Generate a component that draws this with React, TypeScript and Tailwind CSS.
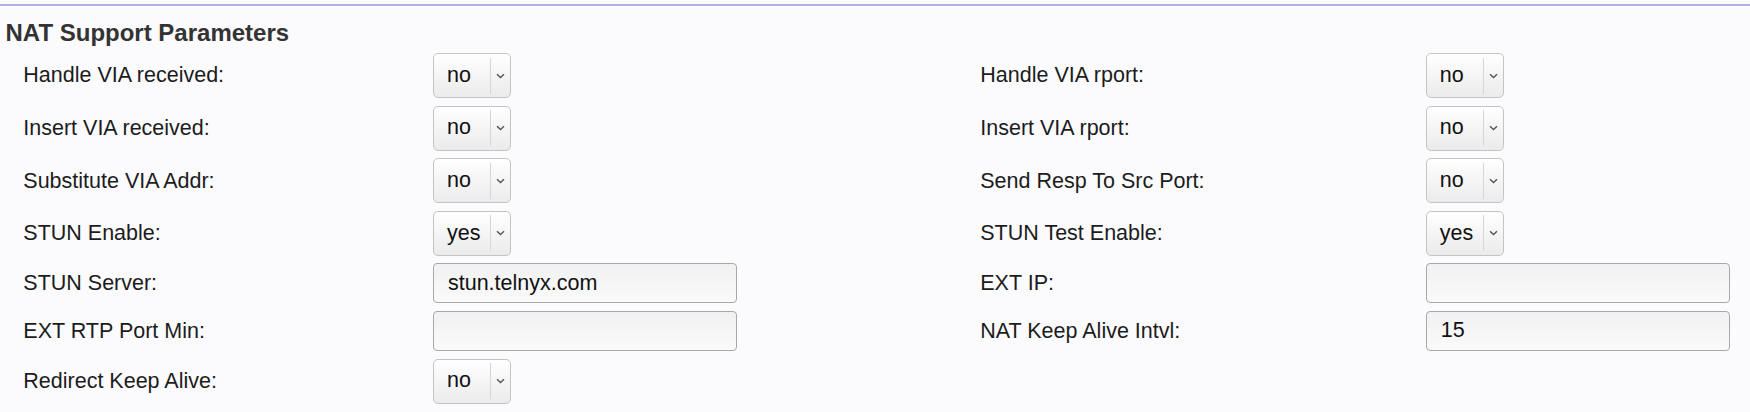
import React from 'react';

type Field =
  | { label: string; kind: 'select'; value: string }
  | { label: string; kind: 'input'; value: string }
  | null;

const rows: [Field, Field][] = [
  [
    { label: 'Handle VIA received:', kind: 'select', value: 'no' },
    { label: 'Handle VIA rport:', kind: 'select', value: 'no' },
  ],
  [
    { label: 'Insert VIA received:', kind: 'select', value: 'no' },
    { label: 'Insert VIA rport:', kind: 'select', value: 'no' },
  ],
  [
    { label: 'Substitute VIA Addr:', kind: 'select', value: 'no' },
    { label: 'Send Resp To Src Port:', kind: 'select', value: 'no' },
  ],
  [
    { label: 'STUN Enable:', kind: 'select', value: 'yes' },
    { label: 'STUN Test Enable:', kind: 'select', value: 'yes' },
  ],
  [
    { label: 'STUN Server:', kind: 'input', value: 'stun.telnyx.com' },
    { label: 'EXT IP:', kind: 'input', value: '' },
  ],
  [
    { label: 'EXT RTP Port Min:', kind: 'input', value: '' },
    { label: 'NAT Keep Alive Intvl:', kind: 'input', value: '15' },
  ],
  [{ label: 'Redirect Keep Alive:', kind: 'select', value: 'no' }, null],
];

const Select: React.FC<{ value: string }> = ({ value }) => (
  <div className="flex h-[45px] w-[78px] items-center rounded-[5px] border border-[#c4c4c4] bg-linear-to-b from-white to-[#ebebeb]">
    <span className="w-[56px] pl-[13px] text-[21.5px] leading-none text-[#111]">{value}</span>
    <div className="flex h-[36px] flex-1 items-center justify-center border-l border-[#d6d6d6]">
      <svg width="9" height="6" viewBox="0 0 9 6" fill="none">
        <path d="M1 1.2l3.5 3.3L8 1.2" stroke="#555" strokeWidth="1.4" />
      </svg>
    </div>
  </div>
);

const Input: React.FC<{ value: string }> = ({ value }) => (
  <div className="flex h-[40px] w-[304px] items-center rounded-[4px] border border-[#a8a8a8] bg-linear-to-b from-[#f1f1f1] to-[#fafafa] pl-[14px] text-[21.5px] leading-none text-[#111]">
    {value}
  </div>
);

const Cells: React.FC<{ field: Field }> = ({ field }) => {
  if (!field) return (<><div /><div /></>);
  return (
    <>
      <div className="flex items-center text-[21.5px] text-[#1c1c1c]">{field.label}</div>
      <div className="flex items-center">
        {field.kind === 'select' ? <Select value={field.value} /> : <Input value={field.value} />}
      </div>
    </>
  );
};

export default function App() {
  return (
    <div className="h-[412px] w-full overflow-hidden bg-[#fbfbfd] font-['Liberation_Sans',Arial,sans-serif]">
      <div className="pt-[4px]">
        <div className="h-[2px] bg-[#b3b1e4]" />
      </div>
      <h2 className="mt-[13px] pl-[5.5px] text-[24px] font-bold leading-[28px] text-[#333]">
        NAT Support Parameters
      </h2>
      <div className="mt-[6px] grid grid-cols-[409.7px_547.3px_445.4px_1fr] gap-y-[7.6px] pl-[23.3px]">
        {rows.map(([a, b], i) => (
          <React.Fragment key={i}>
            <Cells field={a} />
            <Cells field={b} />
          </React.Fragment>
        ))}
      </div>
    </div>
  );
}
